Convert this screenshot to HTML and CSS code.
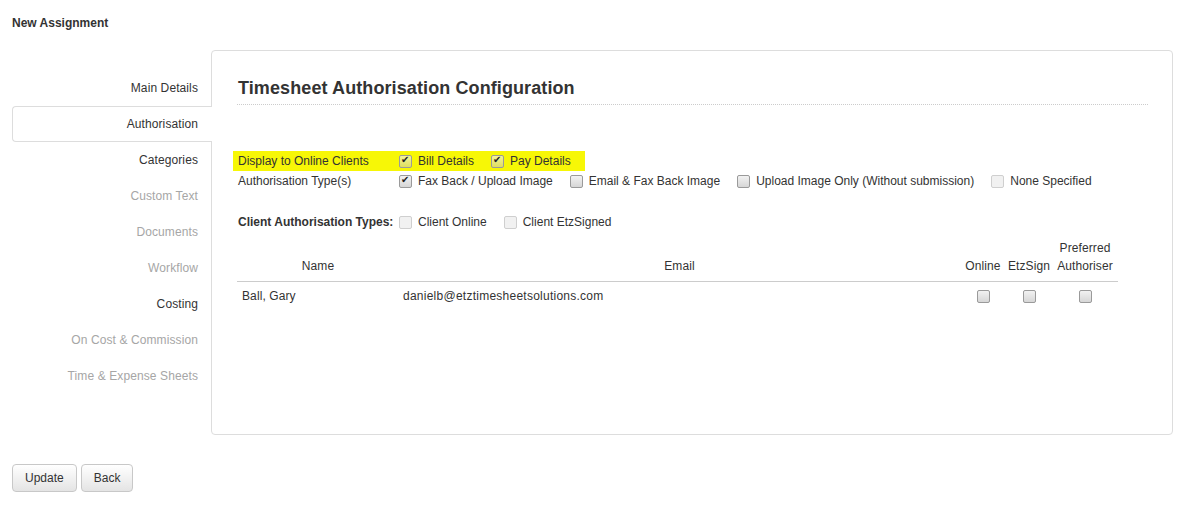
FILE: index.html
```html
<!DOCTYPE html>
<html lang="en">
<head>
    <meta charset="UTF-8">
    <title>New Assignment</title>
    <link rel="stylesheet" href="styles.css">
</head>
<body>
    <h1 class="page-title">New Assignment</h1>

    <div class="layout">
        <ul class="tabs">
            <li class="tab">Main Details</li>
            <li class="tab active">Authorisation</li>
            <li class="tab">Categories</li>
            <li class="tab disabled">Custom Text</li>
            <li class="tab disabled">Documents</li>
            <li class="tab disabled">Workflow</li>
            <li class="tab">Costing</li>
            <li class="tab disabled">On Cost &amp; Commission</li>
            <li class="tab disabled">Time &amp; Expense Sheets</li>
        </ul>

        <div class="panel">
            <h2>Timesheet Authorisation Configuration</h2>

            <div class="options">
                <div class="opt-row highlight">
                    <span class="opt-label">Display to Online Clients</span>
                    <label class="opt"><input type="checkbox" checked> Bill Details</label>
                    <label class="opt"><input type="checkbox" checked> Pay Details</label>
                </div>
                <div class="opt-row">
                    <span class="opt-label">Authorisation Type(s)</span>
                    <label class="opt"><input type="checkbox" checked> Fax Back / Upload Image</label>
                    <label class="opt"><input type="checkbox"> Email &amp; Fax Back Image</label>
                    <label class="opt"><input type="checkbox"> Upload Image Only (Without submission)</label>
                    <label class="opt"><input type="checkbox" disabled> None Specified</label>
                </div>
                <div class="opt-row client-row">
                    <span class="opt-label bold">Client Authorisation Types:</span>
                    <label class="opt"><input type="checkbox" disabled> Client Online</label>
                    <label class="opt"><input type="checkbox" disabled> Client EtzSigned</label>
                </div>
            </div>

            <table class="auth-table">
                <colgroup>
                    <col style="width: 162px">
                    <col style="width: 561px">
                    <col style="width: 46px">
                    <col style="width: 46px">
                    <col style="width: 66px">
                </colgroup>
                <thead>
                    <tr>
                        <th>Name</th>
                        <th>Email</th>
                        <th>Online</th>
                        <th>EtzSign</th>
                        <th>Preferred Authoriser</th>
                    </tr>
                </thead>
                <tbody>
                    <tr>
                        <td>Ball, Gary</td>
                        <td class="email">danielb@etztimesheetsolutions.com</td>
                        <td class="center"><input type="checkbox"></td>
                        <td class="center"><input type="checkbox"></td>
                        <td class="center"><input type="checkbox"></td>
                    </tr>
                </tbody>
            </table>
        </div>
    </div>

    <div class="actions">
        <button>Update</button>
        <button>Back</button>
    </div>
</body>
</html>
```

FILE: styles.css
```css
body {
    margin: 0;
    padding: 15px 7px 0 12px;
    font-family: 'Liberation Sans', Arial, sans-serif;
    font-size: 12px;
    letter-spacing: 0.1px;
    color: #333;
    background: #fff;
}
.page-title {
    margin: 0;
    font-size: 12px;
    line-height: 16px;
    font-weight: bold;
    letter-spacing: 0;
}
.layout {
    display: flex;
    margin-top: 19px;
}
.tabs {
    list-style: none;
    margin: 0;
    padding: 20px 0 0 0;
    width: 199px;
    flex-shrink: 0;
}
.tab {
    height: 34px;
    line-height: 34px;
    border: 1px solid transparent;
    border-right: none;
    padding-right: 13px;
    text-align: right;
    color: #333;
}
.tab.disabled {
    color: #a6a6a6;
}
.tab.active {
    position: relative;
    z-index: 1;
    margin-right: -1px;
    padding-right: 14px;
    background: #fff;
    border-color: #ddd;
    border-radius: 4px 0 0 4px;
}
.panel {
    width: 962px;
    height: 385px;
    box-sizing: border-box;
    border: 1px solid #ddd;
    border-radius: 4px;
    padding: 0 24px 0 25px;
}
.panel h2 {
    margin: 0;
    padding: 26px 0 5px 1px;
    font-size: 18px;
    line-height: 22px;
    font-weight: bold;
    letter-spacing: 0.1px;
    border-bottom: 1px dotted #ccc;
}
.options {
    margin-top: 46px;
    letter-spacing: 0;
}
.opt-row {
    display: flex;
    align-items: center;
    height: 20px;
}
.opt-row.highlight {
    background: #f7f706;
    margin-left: -4px;
    padding-left: 4px;
    width: 348px;
}
.client-row {
    margin-top: 21px;
}
.opt-label {
    width: 161px;
    flex-shrink: 0;
    padding-left: 1px;
}
.bold {
    font-weight: bold;
}
.opt {
    display: flex;
    align-items: center;
    margin-right: 17px;
    white-space: nowrap;
}
input[type="checkbox"] {
    appearance: none;
    -webkit-appearance: none;
    position: relative;
    width: 13px;
    height: 13px;
    margin: 0;
    border: 1px solid #9a9a9a;
    border-radius: 2px;
    background: linear-gradient(#f2f2f2, #d6d6d6);
    vertical-align: middle;
}
.opt input[type="checkbox"] {
    margin: 0 6px 0 0;
}
input[type="checkbox"]:checked::after {
    content: "\2714";
    position: absolute;
    left: 1px;
    top: -2px;
    font-family: 'DejaVu Sans', sans-serif;
    font-size: 10px;
    color: #222;
}
input[type="checkbox"]:disabled {
    border-color: #cfcfcf;
    background: #f1f1f1;
}
.highlight input[type="checkbox"] {
    background: linear-gradient(#f3f39a, #dede60);
}
.auth-table {
    margin-top: 5px;
    width: 881px;
    border-collapse: collapse;
    table-layout: fixed;
}
.auth-table th {
    font-weight: normal;
    text-align: center;
    vertical-align: bottom;
    line-height: 18px;
    padding: 2px 0 6px;
    border-bottom: 1px solid #ccc;
}
.auth-table td {
    line-height: 18px;
    padding: 5px 4px 7px;
}
.auth-table td:first-child {
    padding-left: 5px;
}
.auth-table td.email {
    letter-spacing: 0.25px;
}
.auth-table td.center {
    text-align: center;
    padding: 5px 0 7px;
}
.actions {
    margin-top: 29px;
    display: flex;
    gap: 4px;
}
button {
    height: 28px;
    padding: 0 12px;
    font-family: 'Liberation Sans', Arial, sans-serif;
    font-size: 12px;
    color: #333;
    border: 1px solid #c8c8c8;
    border-radius: 4px;
    background: linear-gradient(#ffffff, #e4e4e4);
    cursor: pointer;
}
button:hover {
    background: #e6e6e6;
}
```
